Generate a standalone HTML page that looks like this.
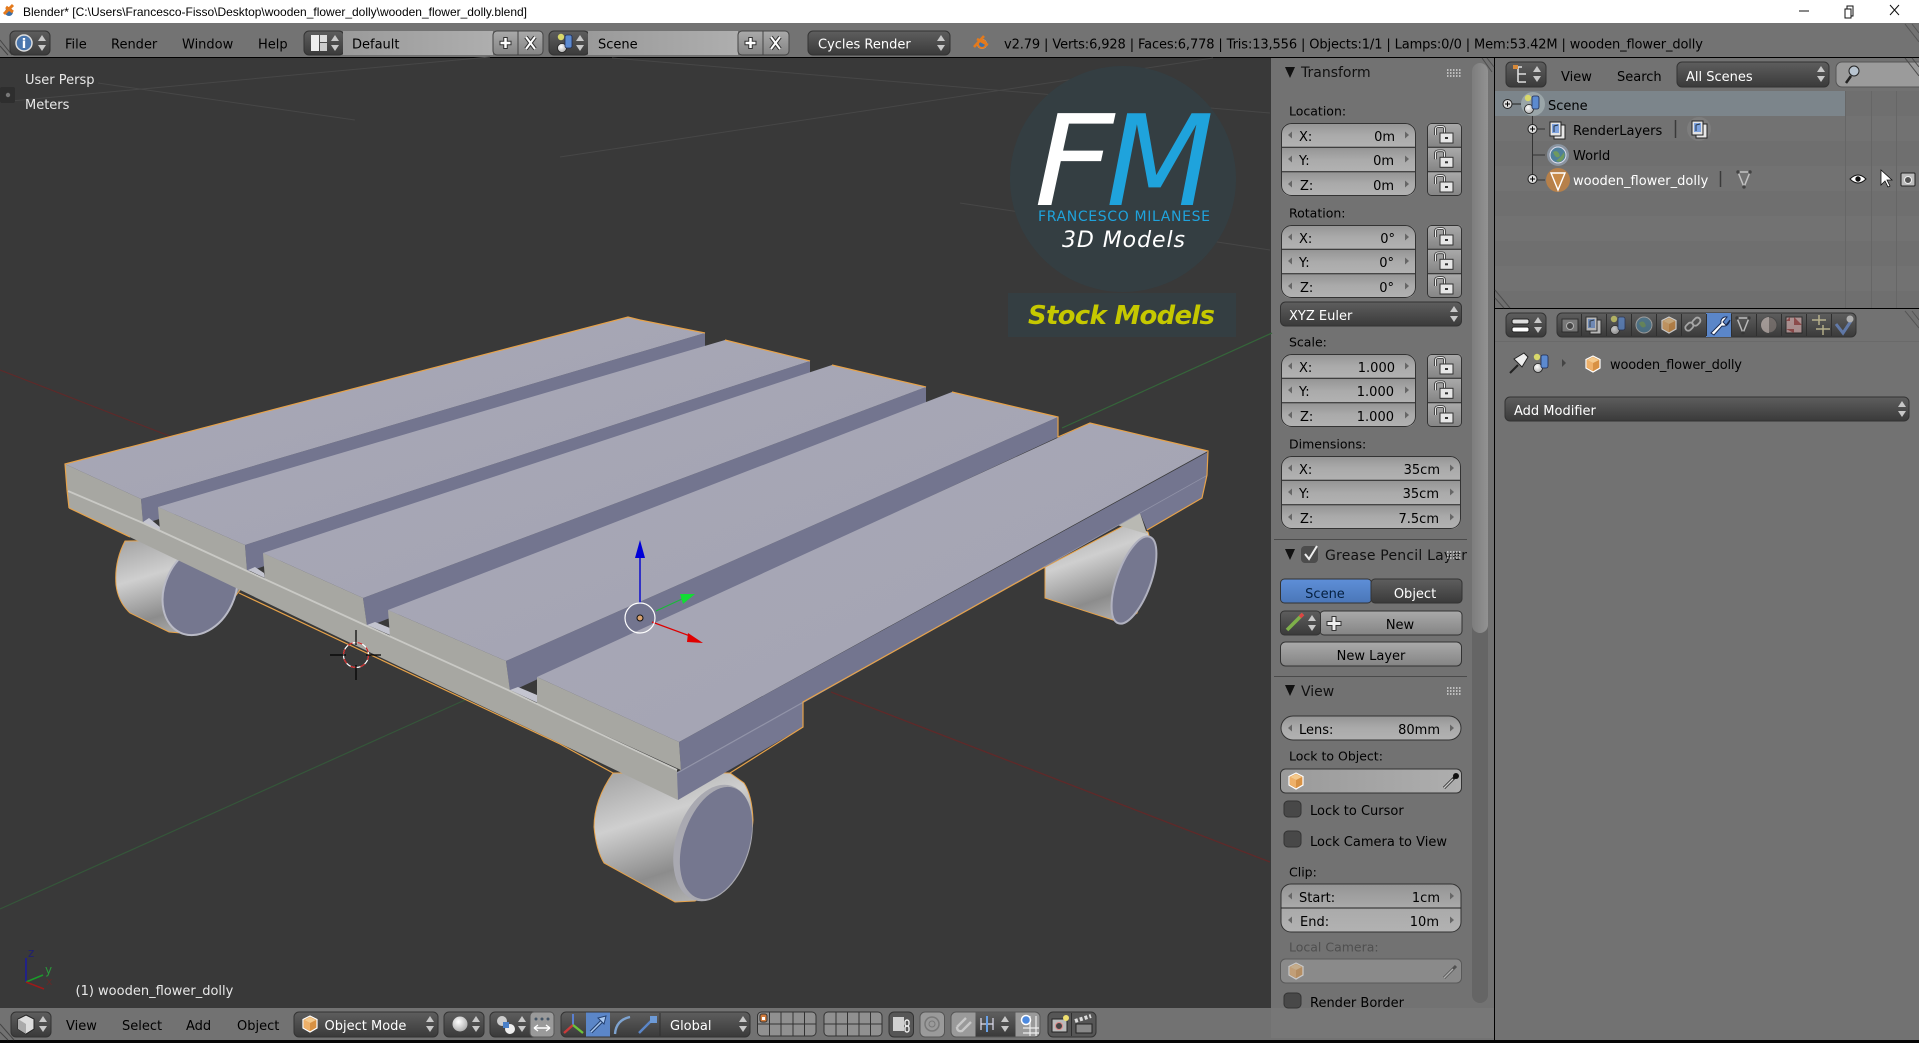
<!DOCTYPE html>
<html><head><meta charset="utf-8"><title>Blender</title>
<style>
html,body{margin:0;padding:0;width:1919px;height:1043px;overflow:hidden;background:#000}
svg{display:block}
text{font-family:"DejaVu Sans","Liberation Sans",sans-serif;font-size:13px;fill:#000}
.w{fill:#fff}.l{fill:#e8e8e8}.r{text-anchor:end}.h{font-size:14px;fill:#111}.lb{font-size:12.5px;fill:#000}
.c{text-anchor:middle}
</style></head><body>
<svg width="1919" height="1043" viewBox="0 0 1919 1043" xmlns="http://www.w3.org/2000/svg">
<defs>
<linearGradient id="num" x1="0" y1="0" x2="0" y2="1"><stop offset="0" stop-color="#949494"/><stop offset=".5" stop-color="#aaa"/><stop offset="1" stop-color="#b2b2b2"/></linearGradient>
<linearGradient id="drk" x1="0" y1="0" x2="0" y2="1"><stop offset="0" stop-color="#5e5e5e"/><stop offset="1" stop-color="#3a3a3a"/></linearGradient>
<linearGradient id="btn" x1="0" y1="0" x2="0" y2="1"><stop offset="0" stop-color="#aaa"/><stop offset="1" stop-color="#848484"/></linearGradient>
<linearGradient id="txtf" x1="0" y1="0" x2="1" y2="0"><stop offset="0" stop-color="#9a9a9a"/><stop offset="1" stop-color="#aeaeae"/></linearGradient>
<linearGradient id="blu" x1="0" y1="0" x2="0" y2="1"><stop offset="0" stop-color="#5e8fd8"/><stop offset="1" stop-color="#4a76b8"/></linearGradient>
<linearGradient id="cyl" x1=".2" y1="0" x2=".6" y2="1"><stop offset="0" stop-color="#a9a9a9"/><stop offset=".35" stop-color="#cfcfcf"/><stop offset=".75" stop-color="#8c8c8c"/><stop offset="1" stop-color="#b0b0b0"/></linearGradient>
<linearGradient id="top" x1="0" y1="0" x2="1" y2="1"><stop offset="0" stop-color="#a8a8b6"/><stop offset="1" stop-color="#a3a3b3"/></linearGradient>
<linearGradient id="thumb" x1="0" y1="0" x2="1" y2="0"><stop offset="0" stop-color="#7d7d7d"/><stop offset="1" stop-color="#929292"/></linearGradient>
<radialGradient id="sph" cx=".4" cy=".35" r=".7"><stop offset="0" stop-color="#fff"/><stop offset="1" stop-color="#aaa"/></radialGradient>
<clipPath id="c3"><rect x="0" y="0" width="135" height="73" rx="10"/></clipPath>
<clipPath id="c3w"><rect x="0" y="0" width="180" height="73" rx="10"/></clipPath>
<clipPath id="cl"><rect x="0" y="0" width="35" height="73" rx="4"/></clipPath>
<g id="ud"><polygon points="0,-2 4,-8 8,-2" fill="#c8c8c8"/><polygon points="0,2 4,8 8,2" fill="#c8c8c8"/></g>
<g id="al"><polygon points="4,-3.5 0,0 4,3.5" fill="#666"/></g>
<g id="ar"><polygon points="0,-3.5 4,0 0,3.5" fill="#666"/></g>
<g id="f3"><g clip-path="url(#c3)"><rect width="135" height="24.3" fill="url(#num)"/><rect y="24.3" width="135" height="24.4" fill="url(#num)"/><rect y="48.7" width="135" height="24.3" fill="url(#num)"/><path d="M0 24.3H135M0 48.7H135" stroke="#222" stroke-width="1"/></g><rect x=".5" y=".5" width="134" height="72" rx="10" fill="none" stroke="#333"/>
<use href="#al" x="7" y="12"/><use href="#ar" x="124" y="12"/><use href="#al" x="7" y="36"/><use href="#ar" x="124" y="36"/><use href="#al" x="7" y="61"/><use href="#ar" x="124" y="61"/></g>
<g id="f3w"><g clip-path="url(#c3w)"><rect width="180" height="24.3" fill="url(#num)"/><rect y="24.3" width="180" height="24.4" fill="url(#num)"/><rect y="48.7" width="180" height="24.3" fill="url(#num)"/><path d="M0 24.3H180M0 48.7H180" stroke="#222"/></g><rect x=".5" y=".5" width="179" height="72" rx="10" fill="none" stroke="#333"/>
<use href="#al" x="7" y="12"/><use href="#ar" x="169" y="12"/><use href="#al" x="7" y="36"/><use href="#ar" x="169" y="36"/><use href="#al" x="7" y="61"/><use href="#ar" x="169" y="61"/></g>
<g id="lk1"><path d="M8.500 12V6Q8.500 3.500 12 3.500H15Q17.500 3.500 17.500 6V10" fill="none" stroke="#333" stroke-width="2.600"/><path d="M8.500 12V6Q8.500 3.500 12 3.500H15Q17.500 3.500 17.500 6V10" fill="none" stroke="#eee" stroke-width="1"/><rect x="13" y="10" width="13" height="10" fill="#e6e6e6" stroke="#333"/><rect x="18" y="14" width="3" height="2" fill="#333"/></g>
<g id="lk"><g clip-path="url(#cl)"><rect width="35" height="24.300" fill="url(#btn)"/><rect y="24.300" width="35" height="24.400" fill="url(#btn)"/><rect y="48.700" width="35" height="24.300" fill="url(#btn)"/><path d="M0 24.300H35M0 48.700H35" stroke="#222"/></g><rect x=".5" y=".5" width="34" height="72" rx="4" fill="none" stroke="#333"/><use href="#lk1"/><use href="#lk1" y="24.300"/><use href="#lk1" y="49"/></g>
<g id="cube"><polygon points="0,-8 7,-4.500 7,4 0,8 -7,4 -7,-4.500" fill="#d89143" stroke="#fff" stroke-width="1.200"/><polygon points="0,-7 6,-4 0,-1 -6,-4" fill="#f4c98c"/><polygon points="0,-1 0,7 -6,3.500 -6,-4" fill="#eeb069"/></g>
<g id="scn"><circle cx="-4" cy="5" r="4.500" fill="url(#sph)" stroke="#222" stroke-width=".8"/><rect x="-1" y="-8" width="7" height="13" rx="2" fill="#5c8ad0" stroke="#1e2a50" stroke-width=".8"/><circle cx="-5" cy="-6" r="3.200" fill="#d8d86a"/></g>
<g id="rl"><rect x="-2" y="-5" width="11" height="14" fill="#e8e8e8" stroke="#222"/><rect x="-6" y="-8" width="11" height="14" fill="#e4e4e4" stroke="#222"/><rect x="-4" y="-6" width="7" height="9" fill="#7ea3e0"/><path d="M-2 2V-4L2-5" stroke="#234" fill="none"/></g>
<g id="tri"><path d="M-6-7H6L0 8Z" fill="none" stroke="#ddd" stroke-width="1.500"/><circle cx="-6" cy="-7" r="1.700" fill="#333"/><circle cx="6" cy="-7" r="1.700" fill="#333"/><circle cx="0" cy="8" r="1.700" fill="#333"/></g>
<g id="exp"><circle r="4.500" fill="#ddd" stroke="#222"/><path d="M-2.500 0H2.500M0-2.500V2.500" stroke="#000"/></g>
</defs>

<!-- title bar -->
<rect width="1919" height="23" fill="#fff"/>
<circle cx="9" cy="12" r="4" fill="#3c6ea5"/><path d="M4 14L13 5M6 7L13 12" stroke="#e57a1c" stroke-width="3" fill="none"/>
<text x="23" y="16" textLength="504" lengthAdjust="spacingAndGlyphs" style="font-family:'Liberation Sans',sans-serif;font-size:12px">Blender* [C:\Users\Francesco-Fisso\Desktop\wooden_flower_dolly\wooden_flower_dolly.blend]</text>
<path d="M1799 11H1809" stroke="#111" stroke-width="1"/>
<path d="M1845 9H1851V18H1845ZM1847 9V6H1853V16H1851" fill="none" stroke="#111"/>
<path d="M1890 5L1899 15M1899 5L1890 15" stroke="#111"/>

<!-- base -->
<rect y="23" width="1919" height="1020" fill="#000"/>
<rect y="23" width="1919" height="34" fill="#737373"/>
<rect y="58" width="1271" height="950" fill="#393939"/>
<rect x="1271" y="58" width="223" height="950" fill="#727272"/>
<rect y="1008" width="1494" height="32" fill="#727272"/>
<rect x="1495" y="58" width="424" height="250" fill="#727272"/>
<rect x="1495" y="309" width="424" height="731" fill="#727272"/>
<rect y="1040" width="1919" height="3" fill="#050505"/>
<rect x="1271" y="1008" width="223" height="30" fill="#777"/>

<!-- viewport lines -->
<g fill="none" stroke="#474747" stroke-width="1">
<path d="M0 102L490 57"/><path d="M98 83L355 120"/><path d="M612 58L1270 113"/><path d="M560 157L1213 58"/><path d="M960 203L1270 250"/>
</g>
<path d="M0 370L172 437" stroke="#5e2a2a" stroke-width="1.200"/>
<path d="M831 692L1270 862" stroke="#5e2a2a" stroke-width="1.400"/>
<path d="M0 909L465 700" stroke="#35563a" stroke-width="1.200"/>
<path d="M1062 428L1272 333" stroke="#35653a" stroke-width="1.200"/>

<!-- back left wheel -->
<path d="M125 541Q114 562 116 585Q118 602 130 613L169 632L192 634L225 610L240 590L200 540Z" fill="url(#cyl)" stroke="#e6a24a"/>
<ellipse cx="200" cy="590" rx="35" ry="47" transform="rotate(25 200 590)" fill="#75778f" stroke="#b9bac6" stroke-width="2"/>
<!-- back right wheel -->
<path d="M1045 567V598L1122 623L1137 613L1155 557L1148 532L1125 525Z" fill="url(#cyl)" stroke="#e6a24a"/>
<polygon points="1117,525 1147,534 1139,510" fill="#b9b9b3"/>
<ellipse cx="1134" cy="580" rx="17" ry="46" transform="rotate(20 1134 580)" fill="#75778f" stroke="#b0b1bf" stroke-width="2"/>
<!-- front wheel -->
<path d="M613 773Q594 800 594 827Q596 850 604 863L675 902L695 901L725 883Q752 845 753 820Q752 795 744 783L730 773Z" fill="url(#cyl)" stroke="#e6a24a"/>
<ellipse cx="713" cy="843" rx="37" ry="60" transform="rotate(18 713 843)" fill="#a9a9b1"/>
<ellipse cx="716" cy="843" rx="33" ry="58" transform="rotate(18 716 843)" fill="#75778f"/>

<!-- beams -->
<polygon points="67,490 143,523 247,571 367,626 510,691 560,715 677,770 678,800 69,508" fill="#a7a7a2"/>
<polygon points="677,773 1207,475 1202,498 1147,530 1140,513 950,620 803,702 803,727 678,800" fill="#757791"/>
<path d="M677 773L1207 475" stroke="#9193a8" stroke-width="1.500"/>

<!-- plank 1 -->
<polygon points="141,499 705,333 705,352 143,524" fill="#73758f"/>
<polygon points="143,522 149,518 160,527 160,532" fill="#c3c4cf"/>
<polygon points="65,464 141,499 143,523 67,490" fill="#a7a7a2"/>
<polygon points="65,464 628,317 640,320 705,333 141,499" fill="url(#top)"/>
<!-- plank 2 -->
<polygon points="245,545 810,361 810,380 247,572" fill="#73758f"/>
<polygon points="248,570 255,567 264,573 265,578" fill="#c3c4cf"/>
<polygon points="158,507 245,545 247,571 160,531" fill="#a7a7a2"/>
<polygon points="158,507 725,340 810,361 245,545" fill="url(#top)"/>
<!-- plank 3 -->
<polygon points="363,598 926,387 926,407 367,627" fill="#73758f"/>
<polygon points="367,625 375,622 390,628 390,635" fill="#c3c4cf"/>
<polygon points="263,553 363,598 367,626 265,580" fill="#a7a7a2"/>
<polygon points="263,553 832,365 926,387 363,598" fill="url(#top)"/>
<!-- plank 4 -->
<polygon points="506,661 1058,417 1058,437 510,692" fill="#73758f"/>
<polygon points="510,690 518,687 537,695 538,703" fill="#c3c4cf"/>
<polygon points="388,610 506,661 510,691 390,637" fill="#a7a7a2"/>
<polygon points="388,610 952,392 1058,417 506,661" fill="url(#top)"/>
<!-- plank 5 -->
<polygon points="679,742 1208,452 1207,475 681,770" fill="#73758f"/>
<polygon points="537,677 679,742 681,770 537,704" fill="#a7a7a2"/>
<polygon points="537,677 1090,423 1208,451 679,742" fill="url(#top)"/>
<path d="M68 491L143 523L247 571L367 626L510 691L560 715L677 770" fill="none" stroke="#c9c9c5" stroke-width="1.800"/>

<!-- outline -->
<g fill="none" stroke="#e6a24a" stroke-width="1.200">
<path d="M69 508L67 490L65 464L628 317L640 320L705 333"/>
<path d="M725 340L810 361"/><path d="M832 365L926 387"/><path d="M952 392L1058 417V437L1090 423L1208 451L1207 475L1202 498L1147 530"/>
<path d="M1045 567L950 620L803 702V727L730 773"/>
<path d="M69 508L130 537M239 593L560 744L613 773"/>
</g>

<!-- gizmo -->
<path d="M640 603V552" stroke="#0c0ccc" stroke-width="1.500"/><polygon points="640,540 645,558 635,558" fill="#0000d8"/>
<path d="M656 611L682 599" stroke="#19b93a" stroke-width="1.200"/><polygon points="695,594 680,594 683,604" fill="#11dd33"/>
<path d="M652 622L690 636" stroke="#d00" stroke-width="1.200"/><polygon points="703,643 688,633 687,642" fill="#e00000"/>
<circle cx="640" cy="618" r="15" fill="none" stroke="#fff" stroke-width="1.200"/>
<circle cx="640" cy="618" r="3" fill="#d9a26e" stroke="#111"/>
<!-- 3d cursor -->
<circle cx="356" cy="655" r="12.500" fill="none" stroke="#fff" stroke-width="1.200"/>
<circle cx="356" cy="655" r="12.500" fill="none" stroke="#c22" stroke-width="1.200" stroke-dasharray="5 5"/>
<path d="M330 655H346M366 655H381M356 630V645M356 665V680" stroke="#000" stroke-width="1.200"/>

<!-- logo -->
<circle cx="1123" cy="179" r="113" fill="#343e42"/>
<rect x="1008" y="293" width="228" height="44" fill="#343e42"/>
<text x="1034" y="205" style="font-size:126px;font-style:italic;fill:#fff" textLength="80" lengthAdjust="spacingAndGlyphs">F</text>
<text x="1106" y="205" style="font-size:126px;font-style:italic;fill:#1fa3dc" textLength="108" lengthAdjust="spacingAndGlyphs">M</text>
<text x="1038" y="221" style="font-size:14px;fill:#1fa3dc" textLength="172">FRANCESCO MILANESE</text>
<text x="1062" y="247" style="font-size:22px;font-style:italic;fill:#fff" textLength="123">3D Models</text>
<text x="1028" y="324" style="font-size:26px;font-weight:bold;font-style:italic;fill:#c5c800" textLength="187">Stock Models</text>

<!-- viewport text -->
<text class="l" x="25" y="84">User Persp</text>
<text class="l" x="25" y="109">Meters</text>
<rect x="0" y="87" width="15" height="16" rx="2" fill="#2e2e2e"/><circle cx="8" cy="95" r="2.200" fill="#777"/>
<text class="l" x="75.500" y="995">(1) wooden_flower_dolly</text>
<path d="M26 982V958" stroke="#1a1aa0" stroke-width="1.500"/><path d="M26 982L43 975" stroke="#1a9a2a" stroke-width="1.500"/><path d="M26 982L44 989" stroke="#9c1a1a" stroke-width="1.500"/>
<text x="28" y="957" style="font-size:12px;fill:#202070">z</text><text x="45" y="974" style="font-size:12px;fill:#2a9a3a">y</text><text x="46" y="985" style="font-size:11px;fill:#602a2a">x</text>

<!-- top header -->
<path d="M0 40L12 55M0 46L8 55" stroke="#444" stroke-width="1"/>
<path d="M1905 24L1919 42M1912 24L1919 33" stroke="#555"/>
<rect x="10" y="31" width="40" height="24" rx="5" fill="url(#drk)" stroke="#333"/>
<circle cx="24" cy="43" r="8" fill="#4a76ad" stroke="#ddd" stroke-width="1.500"/><text x="24" y="48" class="c w" style="font-size:13px;font-weight:bold">i</text>
<use href="#ud" x="38" y="43"/>
<text x="65" y="48.500">File</text><text x="111" y="48.500">Render</text><text x="182" y="48.500">Window</text><text x="258" y="48.500">Help</text>

<rect x="304" y="31" width="40" height="24" rx="5" fill="url(#drk)" stroke="#333"/>
<rect x="311" y="35" width="8" height="16" fill="#eee"/><rect x="320" y="35" width="7" height="7" fill="#ddd"/><rect x="320" y="43" width="7" height="8" fill="#ccc"/><use href="#ud" x="331" y="43"/>
<rect x="343" y="31" width="150" height="24" fill="url(#txtf)"/>
<text x="352" y="48.500">Default</text>
<rect x="493" y="31" width="50" height="24" rx="4" fill="url(#btn)" stroke="#444"/>
<path d="M518 31V55" stroke="#444"/>
<path d="M505.500 37V49M499.500 43H511.500" stroke="#333" stroke-width="4.500"/><path d="M505.500 38V48M500.500 43H510.500" stroke="#fff" stroke-width="2.500"/>
<path d="M526 37L535 49M535 37L526 49" stroke="#333" stroke-width="4"/><path d="M526 37L535 49M535 37L526 49" stroke="#fff" stroke-width="2"/>

<rect x="549" y="31" width="40" height="24" rx="5" fill="url(#drk)" stroke="#333"/><use href="#scn" x="566" y="43"/><use href="#ud" x="576" y="43"/>
<rect x="588" y="31" width="150" height="24" fill="url(#txtf)"/>
<text x="598" y="48.500">Scene</text>
<rect x="738" y="31" width="51" height="24" rx="4" fill="url(#btn)" stroke="#444"/>
<path d="M763 31V55" stroke="#444"/>
<path d="M750.500 37V49M744.500 43H756.500" stroke="#333" stroke-width="4.500"/><path d="M750.500 38V48M745.500 43H755.500" stroke="#fff" stroke-width="2.500"/>
<path d="M771 37L780 49M780 37L771 49" stroke="#333" stroke-width="4"/><path d="M771 37L780 49M780 37L771 49" stroke="#fff" stroke-width="2"/>

<rect x="808" y="31" width="142" height="24" rx="5" fill="url(#drk)" stroke="#333"/>
<text class="w" x="818" y="48.500">Cycles Render</text><use href="#ud" x="937" y="43"/>

<circle cx="982" cy="44" r="4.500" fill="#3f6fa5" stroke="#fff"/><path d="M974 47L984 36M977 39L988 45" stroke="#e47a1d" stroke-width="2.600" fill="none"/><circle cx="982" cy="44" r="4" fill="none" stroke="#e47a1d" stroke-width="2"/>
<text x="1004" y="48.500" textLength="699">v2.79 | Verts:6,928 | Faces:6,778 | Tris:13,556 | Objects:1/1 | Lamps:0/0 | Mem:53.42M | wooden_flower_dolly</text>

<!-- N panel -->
<path d="M1482 58L1492 72M1487 58L1494 67" stroke="#4d4d4d"/>
<rect x="1472" y="63" width="16" height="940" rx="8" fill="#656565"/>
<rect x="1472" y="63" width="16" height="570" rx="8" fill="url(#thumb)"/>
<polygon points="1285,67 1295,67 1290,78" fill="#111"/>
<text class="h" x="1301" y="77">Transform</text>
<path d="M1447 70H1461M1447 73H1461M1447 76H1461" stroke="#d8d8d8" stroke-dasharray="1.500 1.500" stroke-width="1.500"/>
<text class="lb" x="1289" y="115.500">Location:</text>
<use href="#f3" x="1281" y="123"/><use href="#lk" x="1427" y="123"/>
<text x="1299" y="141">X:</text><text class="r" x="1395" y="141">0m</text>
<text x="1299" y="165">Y:</text><text class="r" x="1394" y="165">0m</text>
<text x="1300" y="190">Z:</text><text class="r" x="1394" y="190">0m</text>
<text class="lb" x="1289" y="217.500">Rotation:</text>
<use href="#f3" x="1281" y="225"/><use href="#lk" x="1427" y="225"/>
<text x="1299" y="243">X:</text><text class="r" x="1395" y="243">0°</text>
<text x="1299" y="267">Y:</text><text class="r" x="1394" y="267">0°</text>
<text x="1300" y="292">Z:</text><text class="r" x="1394" y="292">0°</text>
<rect x="1280.500" y="302" width="181" height="24" rx="5" fill="url(#drk)" stroke="#333"/>
<text class="w" x="1289" y="320">XYZ Euler</text><use href="#ud" x="1450" y="314"/>
<text class="lb" x="1289" y="346.500">Scale:</text>
<use href="#f3" x="1281" y="354"/><use href="#lk" x="1427" y="354"/>
<text x="1299" y="372">X:</text><text class="r" x="1395" y="372">1.000</text>
<text x="1299" y="396">Y:</text><text class="r" x="1394" y="396">1.000</text>
<text x="1300" y="421">Z:</text><text class="r" x="1394" y="421">1.000</text>
<text class="lb" x="1289" y="448.500">Dimensions:</text>
<use href="#f3w" x="1281" y="456"/>
<text x="1299" y="474">X:</text><text class="r" x="1440" y="474">35cm</text>
<text x="1299" y="498">Y:</text><text class="r" x="1439" y="498">35cm</text>
<text x="1300" y="523">Z:</text><text class="r" x="1439" y="523">7.5cm</text>
<path d="M1274 539.500H1467" stroke="#4a4a4a"/>

<polygon points="1285,549 1295,549 1290,560" fill="#111"/>
<rect x="1301" y="546" width="17" height="17" rx="4" fill="#4c4c4c"/><path d="M1305 554L1309 559L1317 546" stroke="#eee" stroke-width="2" fill="none"/>
<text class="h" x="1325" y="560" textLength="142">Grease Pencil Layer</text>
<path d="M1447 552H1461M1447 555H1461M1447 558H1461" stroke="#d8d8d8" stroke-dasharray="1.500 1.500" stroke-width="1.500"/>
<rect x="1280.500" y="579" width="91" height="24" rx="4" fill="url(#blu)" stroke="#333"/>
<rect x="1371" y="579" width="91" height="24" rx="4" fill="url(#drk)" stroke="#333"/>
<text class="c" x="1325" y="598" style="fill:#052040">Scene</text><text class="c w" x="1415" y="598">Object</text>
<rect x="1320" y="611" width="142" height="24" rx="4" fill="url(#btn)" stroke="#333"/>
<rect x="1280.500" y="611" width="40" height="24" rx="4" fill="url(#drk)" stroke="#333"/>
<path d="M1287 630L1303 614" stroke="#7eb04a" stroke-width="3.500"/><path d="M1300 617L1303 614" stroke="#d44" stroke-width="3.500"/><use href="#ud" x="1308" y="623"/>
<path d="M1334 616V631M1326.500 623.500H1341.500" stroke="#333" stroke-width="5"/><path d="M1334 617V630M1327.500 623.500H1340.500" stroke="#eee" stroke-width="3"/>
<text class="c" x="1400" y="629">New</text>
<rect x="1280.500" y="642" width="181" height="24" rx="5" fill="url(#btn)" stroke="#333"/>
<text class="c" x="1371" y="660">New Layer</text>
<path d="M1274 676.500H1467" stroke="#4a4a4a"/>
<polygon points="1285,685 1295,685 1290,696" fill="#111"/>
<text class="h" x="1301" y="696">View</text>
<path d="M1447 688H1461M1447 691H1461M1447 694H1461" stroke="#d8d8d8" stroke-dasharray="1.500 1.500" stroke-width="1.500"/>
<rect x="1281" y="716" width="180" height="24" rx="12" fill="url(#num)" stroke="#333"/>
<use href="#al" x="1288" y="728"/><use href="#ar" x="1450" y="728"/>
<text x="1299" y="734">Lens:</text><text class="r" x="1440" y="734">80mm</text>
<text class="lb" x="1289" y="760.500">Lock to Object:</text>
<rect x="1280.500" y="769" width="181" height="24" rx="5" fill="url(#txtf)" stroke="#333"/>
<use href="#cube" x="1296" y="781"/>
<path d="M1444 788L1456 776" stroke="#222" stroke-width="3"/><path d="M1444 788L1453 779" stroke="#ccc" stroke-width="1.400"/><circle cx="1456" cy="776" r="3" fill="#111"/>
<rect x="1284" y="801" width="17" height="16" rx="4" fill="#484848" stroke="#333"/>
<text x="1310" y="815">Lock to Cursor</text>
<rect x="1284" y="831" width="17" height="16" rx="4" fill="#484848" stroke="#333"/>
<text x="1310" y="846">Lock Camera to View</text>
<text class="lb" x="1289" y="876.500">Clip:</text>
<rect x="1281" y="884" width="180" height="48" rx="10" fill="url(#num)" stroke="#333"/>
<path d="M1281 908H1461" stroke="#222"/>
<use href="#al" x="1288" y="896"/><use href="#ar" x="1450" y="896"/><use href="#al" x="1288" y="920"/><use href="#ar" x="1450" y="920"/>
<text x="1299" y="902">Start:</text><text class="r" x="1440" y="902">1cm</text>
<text x="1300" y="926">End:</text><text class="r" x="1439" y="926">10m</text>
<text class="lb" x="1289" y="951.500" style="fill:#4f4f4f">Local Camera:</text>
<rect x="1280.500" y="959" width="181" height="24" rx="5" fill="#8a8a8a" stroke="#595959"/>
<g opacity=".55"><use href="#cube" x="1296" y="971"/><path d="M1444 978L1456 966" stroke="#222" stroke-width="3"/><path d="M1444 978L1453 969" stroke="#ccc" stroke-width="1.400"/></g>
<rect x="1284" y="993" width="17" height="15" rx="4" fill="#484848" stroke="#333"/>
<text x="1310" y="1007">Render Border</text>

<!-- outliner -->
<rect x="1495" y="91" width="424" height="217" fill="#6f6f6f"/>
<rect x="1495" y="116" width="424" height="25" fill="#727272"/><rect x="1495" y="166" width="424" height="25" fill="#727272"/><rect x="1495" y="216" width="424" height="25" fill="#727272"/><rect x="1495" y="266" width="424" height="25" fill="#727272"/>
<rect x="1495" y="91" width="350" height="25" fill="#7c858b"/>
<path d="M1845.500 91V308M1871.500 91V308M1896.500 91V308" stroke="#666"/>
<rect x="1506" y="62" width="40" height="25" rx="5" fill="url(#drk)" stroke="#333"/>
<path d="M1515 67H1522M1518 67V82M1518 74H1526M1518 82H1526" stroke="#ddd" stroke-width="1.600" fill="none"/><rect x="1513" y="65" width="5" height="4" fill="#d88a3a"/><use href="#ud" x="1533" y="74"/>
<text x="1561" y="81">View</text><text x="1617" y="81">Search</text>
<rect x="1677" y="62" width="152" height="25" rx="5" fill="url(#drk)" stroke="#333"/>
<text class="w" x="1686" y="81">All Scenes</text><use href="#ud" x="1817" y="74"/>
<rect x="1836" y="62" width="90" height="25" rx="6" fill="#9b9b9b" stroke="#555"/>
<circle cx="1854" cy="71" r="5" fill="#b8c4d0" stroke="#222"/><path d="M1851 76L1846 83" stroke="#222" stroke-width="2.500"/>
<use href="#exp" x="1507.500" y="104"/><path d="M1512 104H1522" stroke="#222"/>
<path d="M1532.500 115V180M1537 129H1545M1537 180H1545M1532 155H1545" stroke="#333"/>
<circle cx="1533" cy="104" r="12" fill="#9aa5a8"/><use href="#scn" x="1533" y="104"/>
<text x="1548" y="110">Scene</text>
<use href="#exp" x="1532.500" y="129"/>
<use href="#rl" x="1556" y="130"/>
<text x="1573" y="135">RenderLayers</text><path d="M1675.500 120V138" stroke="#3a3a3a" stroke-width="1.500"/>
<circle cx="1699" cy="129" r="12" fill="#7d7d7d"/><use href="#rl" x="1698" y="129"/>
<circle cx="1558" cy="155" r="11" fill="#8a94a0"/><circle cx="1558" cy="155" r="8" fill="#4e7f9a" stroke="#dde" stroke-width="1"/><path d="M1553 152Q1558 149 1560 156Q1556 160 1553 152Z" fill="#6f9a5f"/><path d="M1556 161Q1562 156 1564 152Q1566 158 1560 162Z" fill="#6f9a5f"/>
<text x="1573" y="160">World</text>
<use href="#exp" x="1532.500" y="179"/>
<circle cx="1558" cy="180" r="12" fill="#b6804a"/><path d="M1551 173H1565L1558 190Z" fill="#c88a48" stroke="#fff" stroke-width="1.400"/>
<text class="w" x="1573" y="185">wooden_flower_dolly</text><path d="M1720.500 171V187" stroke="#3a3a3a" stroke-width="1.500"/>
<g opacity=".75"><use href="#tri" x="1744" y="179"/></g>
<path d="M1850 179Q1858 171 1866 179Q1858 187 1850 179Z" fill="#fff" stroke="#111"/><circle cx="1858" cy="179" r="2.700" fill="#111"/>
<path d="M1881 172V187L1885 183L1888 189L1890 188L1887 182L1892 182Z" fill="#fff" stroke="#111" stroke-width=".8" transform="translate(0,-2)"/>
<rect x="1901" y="173" width="14" height="13" rx="1" fill="#bbb" stroke="#222"/><circle cx="1908" cy="180" r="3.500" fill="#555" stroke="#eee"/>
<path d="M1495 290L1510 308M1495 298L1504 308" stroke="#4d4d4d"/>
<path d="M1905 58L1919 76M1912 58L1919 67" stroke="#4d4d4d"/>

<!-- properties header -->
<rect x="1495" y="309" width="424" height="32" fill="#727272"/>
<path d="M1495 341.500H1919" stroke="#6a6a6a"/>
<path d="M1905 311L1919 328M1912 311L1919 320" stroke="#555"/>
<rect x="1506" y="313" width="40" height="24" rx="5" fill="url(#drk)" stroke="#333"/>
<rect x="1512" y="319" width="17" height="5" rx="2" fill="#ddd" stroke="#222"/><rect x="1512" y="327" width="17" height="5" rx="2" fill="#fff" stroke="#222"/><use href="#ud" x="1534" y="325"/>
<rect x="1557" y="313" width="299" height="24" rx="5" fill="url(#drk)" stroke="#333"/>
<rect x="1706" y="313" width="25" height="24" fill="#5b86c8"/>
<path d="M1581.500 314V336M1606.500 314V336M1631.500 314V336M1656.500 314V336M1681.500 314V336M1706.500 314V336M1731.500 314V336M1756.500 314V336M1781.500 314V336M1806.500 314V336M1831.500 314V336" stroke="#2f2f2f"/>
<g opacity=".7">
<rect x="1562" y="319" width="16" height="13" fill="#8a8a8a" stroke="#222"/><circle cx="1570" cy="326" r="3.500" fill="#444" stroke="#ddd"/>
<use href="#rl" x="1592" y="325"/>
<use href="#scn" x="1619" y="325"/>
<circle cx="1644" cy="325" r="8" fill="#4e7f9a" stroke="#bbb"/><path d="M1639 323Q1644 319 1646 326Q1642 330 1639 323Z" fill="#6f9a5f"/>
<use href="#cube" x="1669" y="325"/>
<rect x="1685" y="324" width="9" height="6" rx="3" transform="rotate(-45 1689 327)" fill="none" stroke="#ccc" stroke-width="1.800"/><rect x="1692" y="319" width="9" height="6" rx="3" transform="rotate(-45 1696 322)" fill="none" stroke="#ccc" stroke-width="1.800"/>
</g>
<path d="M1711 333L1721 323A5 5 0 0 1 1727 317L1723 322L1726 325Q1730 320 1730 320Q1728 327 1722 326L1714 335Z" fill="#fff" stroke="#1a2a50"/>
<g opacity=".75"><use href="#tri" x="1743" y="325"/>
<circle cx="1769" cy="325" r="8" fill="#7d7471" stroke="#444"/><path d="M1769 317A8 8 0 0 0 1769 333Z" fill="#bcb0ac"/>
<rect x="1786" y="317" width="16" height="16" fill="#c9a5a5" stroke="#222"/><path d="M1786 321H1790V317M1794 317V325H1802M1786 329H1794V333" fill="#a04a4a"/>
<path d="M1812 320H1826M1819 315V325M1816 329H1830M1823 325V335" stroke="#d8d0a0" stroke-width="1.500"/>
<path d="M1836 324L1843 333L1851 321" fill="none" stroke="#6a8ac8" stroke-width="3"/><circle cx="1850" cy="319" r="3.500" fill="#ccc"/></g>
<path d="M1510 373l8-8" stroke="#222" stroke-width="2"/><path d="M1514 359L1524 353L1528 357L1522 367Z" fill="#eee" stroke="#222"/>
<use href="#scn" x="1542" y="363"/>
<polygon points="1562,359 1566,363 1562,367" fill="#444"/>
<use href="#cube" x="1593" y="364"/>
<text x="1610" y="369" textLength="132">wooden_flower_dolly</text>
<rect x="1505" y="397" width="404" height="24" rx="5" fill="url(#drk)" stroke="#333"/>
<text class="w" x="1514" y="415">Add Modifier</text><use href="#ud" x="1898" y="409"/>

<!-- bottom header -->
<path d="M0 1024L14 1040M0 1032L8 1040" stroke="#444"/>
<rect x="11" y="1012" width="40" height="25" rx="5" fill="url(#drk)" stroke="#333"/>
<path d="M26 1015L34 1019V1029L26 1034L18 1029V1019Z" fill="#ddd" stroke="#222"/><path d="M26 1024V1034L18 1029V1019Z" fill="#aaa"/><use href="#ud" x="39" y="1024"/>
<text x="66" y="1030">View</text><text x="122" y="1030">Select</text><text x="186" y="1030">Add</text><text x="237" y="1030">Object</text>
<rect x="294" y="1012" width="144" height="25" rx="5" fill="url(#drk)" stroke="#333"/>
<use href="#cube" x="310" y="1024"/><text class="w" x="324.500" y="1030">Object Mode</text><use href="#ud" x="426" y="1024"/>
<rect x="444" y="1012" width="40" height="25" rx="5" fill="url(#drk)" stroke="#333"/>
<circle cx="460" cy="1024" r="7.500" fill="url(#sph)"/><use href="#ud" x="472" y="1024"/>
<rect x="490" y="1012" width="64" height="25" rx="5" fill="url(#drk)" stroke="#333"/>
<circle cx="502" cy="1021" r="5" fill="#ccc"/><circle cx="510" cy="1029" r="5" fill="#eee"/><rect x="503" y="1022" width="6" height="6" fill="#4a80c8"/><use href="#ud" x="518" y="1024"/>
<rect x="530" y="1012" width="24" height="25" rx="4" fill="#9a9a9a" stroke="#555"/>
<path d="M534 1028H550M534 1028l4-3M534 1028l4 3M550 1028l-4-3M550 1028l-4 3" stroke="#fff" stroke-width="1.400" fill="none"/><circle cx="536" cy="1019" r="1.500" fill="#456"/><circle cx="542" cy="1019" r="1.500" fill="#456"/><circle cx="548" cy="1019" r="1.500" fill="#456"/>
<rect x="561" y="1012" width="189" height="25" rx="5" fill="url(#drk)" stroke="#333"/>
<path d="M573 1014V1025" stroke="#5a7fd0" stroke-width="2"/><path d="M573 1025L564 1033" stroke="#c93a3a" stroke-width="2.400"/><path d="M573 1025L583 1033" stroke="#6cc43a" stroke-width="2.400"/>
<rect x="586" y="1012.500" width="24" height="24" fill="#5b86c8"/>
<path d="M591 1032L604 1019" stroke="#24406f" stroke-width="3.600"/><path d="M591 1032L604 1019" stroke="#a9c8f0" stroke-width="1.500"/><polygon points="606,1016 598,1018 604,1024" fill="#a9c8f0" stroke="#24406f"/>
<path d="M615 1034Q616 1020 630 1017" fill="none" stroke="#7ea3d0" stroke-width="2.400"/>
<path d="M639 1033L652 1020" stroke="#5b86c8" stroke-width="2.500"/><rect x="650" y="1016" width="7" height="7" fill="#6d9ad6"/>
<path d="M660 1013V1036" stroke="#2f2f2f"/>
<text class="w" x="670" y="1030">Global</text><use href="#ud" x="739" y="1024"/>
<g fill="#909090" stroke="#333">
<rect x="757.500" y="1012" width="58.500" height="24" rx="4"/><rect x="824" y="1012" width="58" height="24" rx="4"/>
</g>
<path d="M769.500 1012V1036M781 1012V1036M793 1012V1036M804.500 1012V1036M757.500 1024H816M836 1012V1036M847.500 1012V1036M859 1012V1036M870.500 1012V1036M824 1024H882" stroke="#333"/>
<rect x="760" y="1014" width="7" height="8" rx="2" fill="#d07a3a" stroke="#333"/><rect x="762" y="1017" width="3" height="3" fill="#fff"/>
<rect x="889" y="1012" width="24.500" height="25" rx="5" fill="#565656" stroke="#333"/>
<rect x="893" y="1017" width="11" height="14" fill="#d0d0d0"/><rect x="905" y="1020" width="4" height="6" rx="2" fill="none" stroke="#eee" stroke-width="1.400"/><rect x="905" y="1026" width="4" height="6" rx="2" fill="none" stroke="#eee" stroke-width="1.400"/>
<rect x="920" y="1012" width="24.500" height="25" rx="5" fill="#9a9a9a" stroke="#555"/>
<circle cx="932" cy="1024" r="7" fill="none" stroke="#787878" stroke-width="1.500"/><circle cx="932" cy="1024" r="3" fill="none" stroke="#787878"/>
<rect x="951" y="1012" width="89" height="25" rx="5" fill="#9a9a9a" stroke="#555"/>
<path d="M957 1027Q957 1032 962 1031L971 1022M957 1027L966 1018" fill="none" stroke="#c8c8c8" stroke-width="2.400"/>
<rect x="975.500" y="1012.500" width="40" height="24" fill="url(#drk)"/>
<path d="M981 1018V1030M993 1018V1030M981 1024H993" stroke="#dde" stroke-width="1.200"/><path d="M987 1016V1032" stroke="#6aa2e8" stroke-width="2"/><use href="#ud" x="1001" y="1024"/>
<path d="M1023 1028H1039M1023 1033H1039M1030 1016V1036M1036 1016V1036" stroke="#eee" stroke-width="1.200"/><circle cx="1026" cy="1020" r="4.500" fill="#4d8ae0" stroke="#fff" stroke-width="1.500"/>
<rect x="1048" y="1012" width="48" height="25" rx="5" fill="#565656" stroke="#333"/><path d="M1071.500 1013V1036" stroke="#2f2f2f"/>
<rect x="1052" y="1019" width="15" height="13" fill="#bbb" stroke="#222"/><circle cx="1059" cy="1026" r="3.500" fill="#444" stroke="#d88"/><circle cx="1066" cy="1018" r="3" fill="#f0e070"/>
<rect x="1076" y="1024" width="16" height="9" fill="#888" stroke="#222"/><path d="M1075 1021L1091 1016" stroke="#ddd" stroke-width="4" stroke-dasharray="3 2"/>
</svg>
</body></html>
